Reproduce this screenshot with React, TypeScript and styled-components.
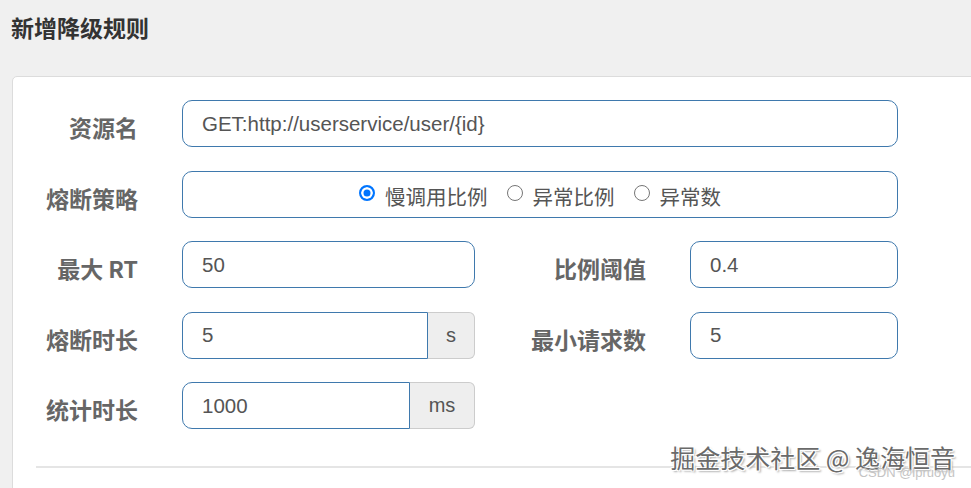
import React from 'react'
import styled, { createGlobalStyle } from 'styled-components'

const GlobalStyle = createGlobalStyle`
  html, body {
    margin: 0;
    padding: 0;
    background: #f0f0f0;
    overflow: hidden;
  }
  body {
    font-family: "Liberation Sans", "Noto Sans CJK SC", sans-serif;
  }
`;

const Page = styled.div`
  position: relative;
  width: 971px;
  height: 488px;
  overflow: hidden;
  background: #f0f0f0;
`;

const Title = styled.h3`
  margin: 0;
  padding: 12px 0 0 11px;
  height: 62px;
  box-sizing: border-box;
  font-family: "Noto Sans CJK SC", sans-serif;
  font-size: 23px;
  font-weight: 700;
  color: #333;
  line-height: 30px;
`;

const Card = styled.div`
  margin: 14px 0 0 12px;
  width: 1000px;
  background: #fff;
  border: 1px solid #dcdcdc;
  border-radius: 5px;
  padding: 23px 0 0 0;
  box-sizing: border-box;
  height: 500px;
`;

const Form = styled.form`
  display: grid;
  grid-template-columns: 125px 293px 127px 208px;
  grid-auto-rows: 47px;
  column-gap: 44px;
  row-gap: 23.5px;
`;

const Label = styled.label`
  display: flex;
  align-items: center;
  justify-content: flex-end;
  padding-top: 7px;
  font-family: "Noto Sans CJK SC", sans-serif;
  font-size: 23px;
  font-weight: 700;
  color: #666;
  white-space: nowrap;
`;

const Input = styled.input<{ $wide?: boolean; $grouped?: boolean }>`
  grid-column: ${p => (p.$wide ? '2 / 5' : 'auto')};
  box-sizing: border-box;
  width: 100%;
  height: 47px;
  min-width: 0;
  padding: 0 19px;
  border: 1px solid #3f79ad;
  border-radius: ${p => (p.$grouped ? '10px 0 0 10px' : '10px')};
  font-family: "Liberation Sans", sans-serif;
  font-size: 20.5px;
  color: #555;
  background: #fff;
  outline: none;
`;

const RadioBox = styled.div`
  grid-column: 2 / 5;
  box-sizing: border-box;
  height: 47px;
  border: 1px solid #3f79ad;
  border-radius: 10px;
  display: flex;
  align-items: center;
  justify-content: center;
  gap: 19px;
  padding: 3px 0 0 0;
`;

const RadioOption = styled.label`
  display: flex;
  align-items: center;
  gap: 10px;
  font-family: "Noto Sans CJK SC", sans-serif;
  font-size: 20.5px;
  color: #555;
`;

const RadioDot = styled.span<{ $checked: boolean }>`
  flex: 0 0 16px;
  box-sizing: border-box;
  display: block;
  width: 16px;
  height: 16px;
  margin-top: -5px;
  border-radius: 50%;
  border: ${p => (p.$checked ? '2px solid #0075ff' : '1.5px solid #767676')};
  background: ${p => (p.$checked ? '#0075ff' : '#fff')};
  box-shadow: ${p => (p.$checked ? 'inset 0 0 0 2.5px #fff' : 'none')};
`;

const Group = styled.div`
  display: flex;
  height: 47px;
`;

const Addon = styled.span<{ $width: number }>`
  flex: 0 0 ${p => p.$width}px;
  box-sizing: border-box;
  display: flex;
  align-items: center;
  justify-content: center;
  background: #eee;
  border: 1px solid #ccc;
  border-left: none;
  border-radius: 0 6px 6px 0;
  font-family: "Liberation Sans", sans-serif;
  font-size: 20px;
  color: #555;
`;

const Divider = styled.hr`
  margin: 37px 0 0 23px;
  border: none;
  border-top: 2px solid #e5e5e5;
`;

const Watermark = styled.div`
  position: absolute;
  right: 16px;
  top: 439px;
  font-family: "Noto Sans CJK SC", sans-serif;
  font-size: 25px;
  color: #6a6a6a;
  text-shadow: 1px 1px 0 #fff, -1px -1px 0 #fff, 1px -1px 0 #fff, -1px 1px 0 #fff, 2px 2px 2px #aaa;
  white-space: nowrap;
`;

const SubMark = styled.div`
  position: absolute;
  right: 16px;
  top: 465px;
  font-family: "Liberation Sans", sans-serif;
  font-size: 13px;
  color: #c4c4c4;
  white-space: nowrap;
`;

const strategies = ['慢调用比例', '异常比例', '异常数'];

export default function App() {
  return (
    <Page>
      <GlobalStyle />
      <Title>新增降级规则</Title>
      <Card>
        <Form onSubmit={e => e.preventDefault()}>
          <Label>资源名</Label>
          <Input $wide defaultValue="GET:http://userservice/user/{id}" />

          <Label>熔断策略</Label>
          <RadioBox>
            {strategies.map((s, i) => (
              <RadioOption key={s}>
                <RadioDot $checked={i === 0} />
                {s}
              </RadioOption>
            ))}
          </RadioBox>

          <Label>最大 RT</Label>
          <Input defaultValue="50" />
          <Label>比例阈值</Label>
          <Input defaultValue="0.4" />

          <Label>熔断时长</Label>
          <Group>
            <Input $grouped defaultValue="5" />
            <Addon $width={47}>s</Addon>
          </Group>
          <Label>最小请求数</Label>
          <Input defaultValue="5" />

          <Label>统计时长</Label>
          <Group>
            <Input $grouped defaultValue="1000" />
            <Addon $width={65}>ms</Addon>
          </Group>
        </Form>
        <Divider />
      </Card>
      <Watermark>掘金技术社区 @ 逸海恒音</Watermark>
      <SubMark>CSDN @lpruoyu</SubMark>
    </Page>
  )
}
